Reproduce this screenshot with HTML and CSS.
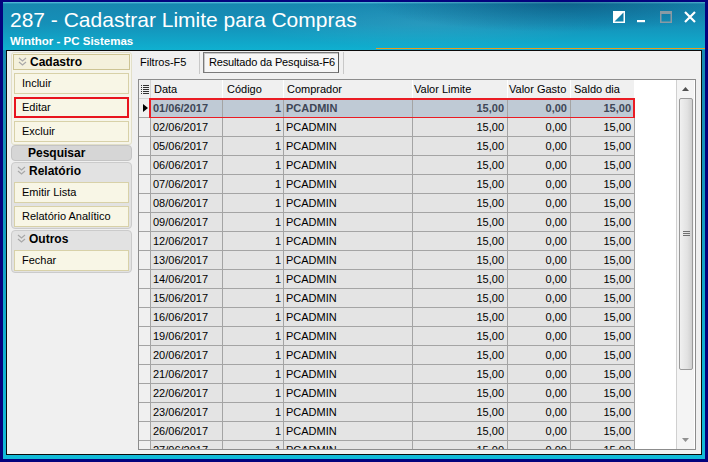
FILE: index.html
```html
<!DOCTYPE html>
<html lang="pt">
<head>
<meta charset="utf-8">
<title>287 - Cadastrar Limite para Compras</title>
<link rel="stylesheet" href="styles.css">
</head>
<body>
<div class="win">
  <div class="titlebar">
    <div class="titlerow">
      <div class="titles">
        <div class="t1">287 - Cadastrar Limite para Compras</div>
        <div class="t2">Winthor - PC Sistemas</div>
      </div>
      <div class="ctrls">
        <svg class="ic i1" width="12" height="12" viewBox="0 0 12 12"><rect x="0.75" y="0.75" width="10.5" height="10.5" fill="none" stroke="#fff" stroke-width="1.5"/><polygon points="0,0 12,0 0,12" fill="#fff"/></svg>
        <svg class="ic i2" width="8" height="12" viewBox="0 0 8 12"><rect x="0" y="9" width="8" height="2.2" fill="#fff"/></svg>
        <svg class="ic i3" width="12" height="12" viewBox="0 0 12 12"><rect x="0.75" y="0.75" width="10.5" height="10.5" fill="none" stroke="#8a9aa4" stroke-width="1.5"/><rect x="0" y="0" width="12" height="3" fill="#8a9aa4"/></svg>
        <svg class="ic i4" width="12" height="12" viewBox="0 0 12 12"><path d="M1 1 L11 11 M11 1 L1 11" stroke="#fff" stroke-width="2.2"/></svg>
      </div>
    </div>
    <div class="orange"></div>
  </div>

  <div class="panel">
    <aside class="side">
      <div class="grp cream">
        <div class="ghead"><svg class="chev" width="9" height="10" viewBox="0 0 9 10"><path d="M1 1 L4.5 4 L8 1 M1 5 L4.5 8 L8 5" fill="none" stroke="#a8a8a8" stroke-width="1.2"/></svg>Cadastro</div>
        <div class="btn">Incluir</div>
        <div class="btn hl">Editar</div>
        <div class="btn">Excluir</div>
      </div>
      <div class="pesq">Pesquisar</div>
      <div class="grp gray">
        <div class="ghead"><svg class="chev" width="9" height="10" viewBox="0 0 9 10"><path d="M1 1 L4.5 4 L8 1 M1 5 L4.5 8 L8 5" fill="none" stroke="#a8a8a8" stroke-width="1.2"/></svg>Relatório</div>
        <div class="btn">Emitir Lista</div>
        <div class="btn">Relatório Analítico</div>
      </div>
      <div class="grp gray">
        <div class="ghead"><svg class="chev" width="9" height="10" viewBox="0 0 9 10"><path d="M1 1 L4.5 4 L8 1 M1 5 L4.5 8 L8 5" fill="none" stroke="#a8a8a8" stroke-width="1.2"/></svg>Outros</div>
        <div class="btn">Fechar</div>
      </div>
    </aside>

    <main class="main">
      <div class="tabs">
        <div class="tab">Filtros-F5</div>
        <div class="tabwrap"><div class="tab active">Resultado da Pesquisa-F6</div></div>
      </div>
      <div class="grid">
        <div class="table">
          <div class="row head">
            <div class="c ind"><svg width="8" height="9" viewBox="0 0 8 9"><g fill="#333"><rect x="0" y="0" width="1" height="1"/><rect x="0" y="2" width="1" height="1"/><rect x="0" y="4" width="1" height="1"/><rect x="0" y="6" width="1" height="1"/><rect x="0" y="8" width="1" height="1"/><rect x="2" y="0" width="6" height="1"/><rect x="2" y="2" width="6" height="1"/><rect x="2" y="4" width="6" height="1"/><rect x="2" y="6" width="6" height="1"/><rect x="2" y="8" width="6" height="1"/></g></svg></div>
            <div class="c">Data</div>
            <div class="c p4">Código</div>
            <div class="c">Comprador</div>
            <div class="c p1">Valor Limite</div>
            <div class="c p1">Valor Gasto</div>
            <div class="c">Saldo dia</div>
          </div>
          <div class="row sel">
            <div class="c ind"><span class="arrow"></span></div>
            <div class="c">01/06/2017</div><div class="c num">1</div><div class="c">PCADMIN</div><div class="c num">15,00</div><div class="c num">0,00</div><div class="c num">15,00</div>
            <span class="selbox"></span>
          </div>
          <div class="row"><div class="c ind"></div><div class="c">02/06/2017</div><div class="c num">1</div><div class="c">PCADMIN</div><div class="c num">15,00</div><div class="c num">0,00</div><div class="c num">15,00</div></div>
          <div class="row"><div class="c ind"></div><div class="c">05/06/2017</div><div class="c num">1</div><div class="c">PCADMIN</div><div class="c num">15,00</div><div class="c num">0,00</div><div class="c num">15,00</div></div>
          <div class="row"><div class="c ind"></div><div class="c">06/06/2017</div><div class="c num">1</div><div class="c">PCADMIN</div><div class="c num">15,00</div><div class="c num">0,00</div><div class="c num">15,00</div></div>
          <div class="row"><div class="c ind"></div><div class="c">07/06/2017</div><div class="c num">1</div><div class="c">PCADMIN</div><div class="c num">15,00</div><div class="c num">0,00</div><div class="c num">15,00</div></div>
          <div class="row"><div class="c ind"></div><div class="c">08/06/2017</div><div class="c num">1</div><div class="c">PCADMIN</div><div class="c num">15,00</div><div class="c num">0,00</div><div class="c num">15,00</div></div>
          <div class="row"><div class="c ind"></div><div class="c">09/06/2017</div><div class="c num">1</div><div class="c">PCADMIN</div><div class="c num">15,00</div><div class="c num">0,00</div><div class="c num">15,00</div></div>
          <div class="row"><div class="c ind"></div><div class="c">12/06/2017</div><div class="c num">1</div><div class="c">PCADMIN</div><div class="c num">15,00</div><div class="c num">0,00</div><div class="c num">15,00</div></div>
          <div class="row"><div class="c ind"></div><div class="c">13/06/2017</div><div class="c num">1</div><div class="c">PCADMIN</div><div class="c num">15,00</div><div class="c num">0,00</div><div class="c num">15,00</div></div>
          <div class="row"><div class="c ind"></div><div class="c">14/06/2017</div><div class="c num">1</div><div class="c">PCADMIN</div><div class="c num">15,00</div><div class="c num">0,00</div><div class="c num">15,00</div></div>
          <div class="row"><div class="c ind"></div><div class="c">15/06/2017</div><div class="c num">1</div><div class="c">PCADMIN</div><div class="c num">15,00</div><div class="c num">0,00</div><div class="c num">15,00</div></div>
          <div class="row"><div class="c ind"></div><div class="c">16/06/2017</div><div class="c num">1</div><div class="c">PCADMIN</div><div class="c num">15,00</div><div class="c num">0,00</div><div class="c num">15,00</div></div>
          <div class="row"><div class="c ind"></div><div class="c">19/06/2017</div><div class="c num">1</div><div class="c">PCADMIN</div><div class="c num">15,00</div><div class="c num">0,00</div><div class="c num">15,00</div></div>
          <div class="row"><div class="c ind"></div><div class="c">20/06/2017</div><div class="c num">1</div><div class="c">PCADMIN</div><div class="c num">15,00</div><div class="c num">0,00</div><div class="c num">15,00</div></div>
          <div class="row"><div class="c ind"></div><div class="c">21/06/2017</div><div class="c num">1</div><div class="c">PCADMIN</div><div class="c num">15,00</div><div class="c num">0,00</div><div class="c num">15,00</div></div>
          <div class="row"><div class="c ind"></div><div class="c">22/06/2017</div><div class="c num">1</div><div class="c">PCADMIN</div><div class="c num">15,00</div><div class="c num">0,00</div><div class="c num">15,00</div></div>
          <div class="row"><div class="c ind"></div><div class="c">23/06/2017</div><div class="c num">1</div><div class="c">PCADMIN</div><div class="c num">15,00</div><div class="c num">0,00</div><div class="c num">15,00</div></div>
          <div class="row"><div class="c ind"></div><div class="c">26/06/2017</div><div class="c num">1</div><div class="c">PCADMIN</div><div class="c num">15,00</div><div class="c num">0,00</div><div class="c num">15,00</div></div>
          <div class="row"><div class="c ind"></div><div class="c">27/06/2017</div><div class="c num">1</div><div class="c">PCADMIN</div><div class="c num">15,00</div><div class="c num">0,00</div><div class="c num">15,00</div></div>
        </div>
        <div class="sbar">
          <div class="sbtn"><svg width="7" height="4" viewBox="0 0 7 4"><polygon points="3.5,0 7,4 0,4" fill="#505050"/></svg></div>
          <div class="thumb"><svg width="7" height="6" viewBox="0 0 7 6"><g fill="#707070"><rect x="0" y="0" width="7" height="1"/><rect x="0" y="2" width="7" height="1"/><rect x="0" y="4" width="7" height="1"/></g></svg></div>
          <div class="track"></div>
          <div class="sbtn"><svg width="7" height="4" viewBox="0 0 7 4"><polygon points="0,0 7,0 3.5,4" fill="#909090"/></svg></div>
        </div>
      </div>
    </main>
  </div>
</div>
</body>
</html>
```
FILE: styles.css
```css
html, body {
  margin: 0;
  padding: 0;
  background: #03037e;
}
body {
  width: 708px;
  height: 462px;
  overflow: hidden;
  font-family: "Liberation Sans", Arial, sans-serif;
  font-size: 11px;
  color: #000;
}
.win {
  box-sizing: border-box;
  width: 708px;
  height: 462px;
  border: 3px solid #03037e;
  border-top-width: 2px;
  background: linear-gradient(180deg, #1a86ae 0%, #1596bc 40%, #10b2d2 80%, #12bad8 100%);
  display: flex;
  flex-direction: column;
}
.titlebar {
  height: 48px;
  flex: none;
  display: flex;
  flex-direction: column;
  background:
    radial-gradient(ellipse 260px 40px at 80% 0%, rgba(0, 40, 80, 0.38), transparent 75%),
    radial-gradient(ellipse 220px 30px at 60% 45%, rgba(255, 255, 255, 0.08), transparent 80%),
    linear-gradient(180deg, #5ec6e0 0px, #1787b0 2px, #1590b8 45%, #0fb0d0 100%);
}
.titlerow {
  flex: 1;
  display: flex;
  justify-content: space-between;
  align-items: flex-start;
  padding: 0 9px 0 7px;
}
.titles {
  padding-top: 6px;
  color: #fff;
}
.t1 {
  font-size: 21px;
  line-height: 24px;
}
.t2 {
  font-weight: bold;
  font-size: 11.5px;
  line-height: 14px;
  margin-top: 2px;
}
.ctrls {
  display: flex;
  padding-top: 9px;
  align-items: flex-start;
}
.ctrls .ic { display: block; }
.ctrls .i2 { margin-left: 12px; }
.ctrls .i3 { margin-left: 15px; }
.ctrls .i4 { margin-left: 12px; }
.orange {
  height: 2px;
  margin: 0 0 1px 373px;
  background: #e99b1c;
}
.panel {
  box-sizing: border-box;
  height: 405px;
  flex: none;
  margin: 0 3px;
  border: 1px solid #0a0a0a;
  background: #f0f0f0;
  display: flex;
  padding: 1px 5px 4px 4px;
  gap: 6px;
}
.side {
  width: 121px;
  flex: none;
  display: flex;
  flex-direction: column;
}
.grp {
  box-sizing: border-box;
  border-radius: 3px;
  padding: 1px 1px 2px 1px;
  display: flex;
  flex-direction: column;
}
.grp.cream {
  background: #f6f5ea;
  border: 1px solid #e2dfc8;
}
.grp.gray {
  background: #e2e2e2;
  border: 1px solid #cbcbcb;
  border-radius: 4px;
  margin-top: 1px;
  padding: 0 1px 1px 1px;
}
.ghead {
  box-sizing: border-box;
  height: 16px;
  display: flex;
  align-items: center;
  font-weight: bold;
  font-size: 12px;
  padding-left: 4px;
  gap: 3px;
}
.grp.cream .ghead {
  background: #f4f1dc;
  border: 1px solid #cdc493;
}
.chev { display: block; flex: none; }
.btn {
  box-sizing: border-box;
  height: 21px;
  margin: 3px 1px 0 1px;
  border: 1px solid #d8d1a8;
  background: #f8f6e6;
  line-height: 19px;
  padding-left: 7px;
  font-size: 11px;
  white-space: nowrap;
}
.btn.hl {
  border: 2px solid #e8141e;
  padding-left: 6px;
  line-height: 17px;
}
.pesq {
  box-sizing: border-box;
  height: 16px;
  background: #d6d6d6;
  border: 1px solid #c4c4c4;
  border-radius: 4px;
  font-weight: bold;
  font-size: 12px;
  line-height: 14px;
  padding-left: 16px;
}
.main {
  flex: 1;
  display: flex;
  flex-direction: column;
  min-width: 0;
}
.tabs {
  height: 27px;
  flex: none;
  display: flex;
  align-items: flex-start;
}
.tab {
  height: 22px;
  line-height: 20px;
  padding: 0 2px;
  width: 57px;
  font-size: 11px;
  white-space: nowrap;
}
.tabwrap {
  height: 22px;
  border-left: 1px solid #c8c8c8;
  border-right: 1px solid #c8c8c8;
  padding: 0 4px 0 3px;
}
.tab.active {
  box-sizing: border-box;
  width: 136px;
  height: 21px;
  line-height: 18px;
  padding: 0 0 0 5px;
  border: 1px solid #7a7a7a;
  border-right-color: #5a5a5a;
  box-shadow: inset 1px 1px 0 #c8c8c8;
  background: #f6f6f6;
  letter-spacing: -0.15px;
}
.grid {
  box-sizing: border-box;
  height: 371px;
  border: 1px solid #8c8c8c;
  background: #fff;
  display: flex;
  overflow: hidden;
}
.table {
  flex: 1;
  overflow: hidden;
}
.row {
  position: relative;
  display: grid;
  grid-template-columns: 12px 72px 61px 129px 95px 63px 64px;
  height: 19px;
  width: 496px;
}
.c {
  box-sizing: border-box;
  border-right: 1px solid #a4a4a4;
  border-bottom: 1px solid #a4a4a4;
  background: #e4e4e4;
  padding: 0 2px;
  line-height: 18px;
  white-space: nowrap;
  overflow: hidden;
}
.c.num {
  text-align: right;
  padding-right: 3px;
}
.row .c:nth-child(3).num { padding-right: 2px; }
.c.ind {
  background: #f0f0f0;
  padding: 0;
  display: flex;
  align-items: center;
  justify-content: center;
}
.head .c {
  background: #f0f0f0;
  border-right: 1px solid #ffffff;
  border-bottom: 1px solid #d4d4d4;
  padding-left: 3px;
}
.head .c.p4 { padding-left: 4px; }
.head .c.p1 { padding-left: 1px; }
.head .c.ind {
  padding: 0;
  border-right: 1px solid #d4d4d4;
}
.sel .c:not(.ind) {
  background: #bfcad5;
  font-weight: bold;
  color: #3e4656;
}
.arrow {
  width: 0;
  height: 0;
  border-top: 4px solid transparent;
  border-bottom: 4px solid transparent;
  border-left: 5px solid #000;
  margin-left: 1px;
}
.selbox {
  position: absolute;
  left: 10px;
  top: -1px;
  width: 486px;
  height: 21px;
  box-sizing: border-box;
  border: 2px solid #ea1c24;
  pointer-events: none;
}
.sbar {
  width: 17px;
  flex: none;
  margin-right: 1px;
  border-left: 1px solid #d0d0d0;
  background: #f4f4f4;
  display: flex;
  flex-direction: column;
}
.sbtn {
  height: 18px;
  flex: none;
  display: flex;
  align-items: center;
  justify-content: center;
}
.thumb {
  box-sizing: border-box;
  height: 272px;
  flex: none;
  margin: 0 1px 0 2px;
  border: 1px solid #9a9a9a;
  border-radius: 2px;
  background: linear-gradient(90deg, #f0f0f0, #e2e2e2 60%, #cfcfcf);
  display: flex;
  align-items: center;
  justify-content: center;
}
.track { flex: 1; }
```
